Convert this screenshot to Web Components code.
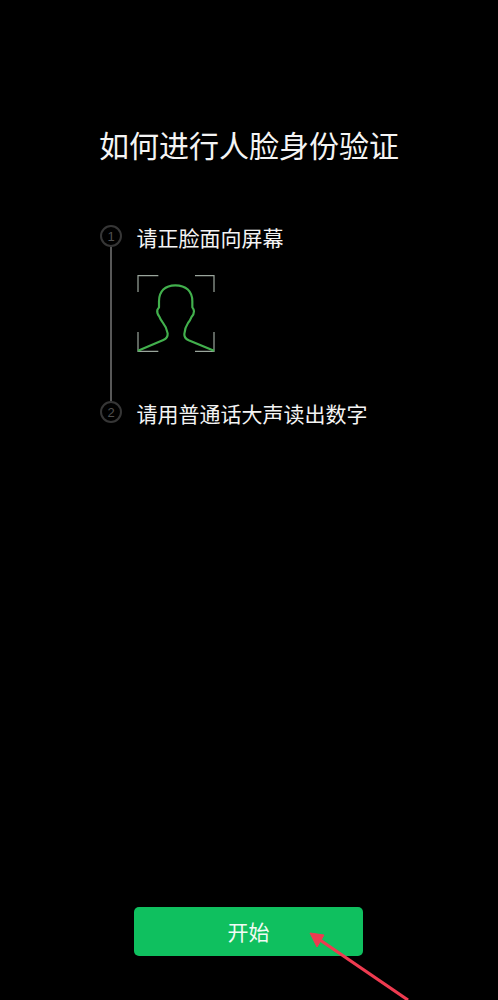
<!doctype html>
<html lang="zh">
<head>
<meta charset="utf-8">
<style>
html,body{margin:0;background:#000;height:100%}
body{font-family:"Noto Sans CJK SC","Liberation Sans",sans-serif;color:#fff}
</style>
</head>
<body>
<guide-screen>
  <span slot="title">如何进行人脸身份验证</span>
  <guide-step num="1" rail>
    <span slot="label">请正脸面向屏幕</span>
    <face-figure></face-figure>
  </guide-step>
  <guide-step num="2">
    <span slot="label">请用普通话大声读出数字</span>
  </guide-step>
  <start-button slot="action">开始</start-button>
</guide-screen>
<script>
function shadow(el,html){el.attachShadow({mode:'open'}).innerHTML=html}
customElements.define('guide-screen',class extends HTMLElement{constructor(){super();shadow(this,`
<style>
:host{display:flex;flex-direction:column;position:relative;width:498px;height:1000px;overflow:hidden;background:#000}
h1{margin:0;padding-top:122px;height:44px;line-height:44px;font-size:30px;font-weight:400;text-align:center;color:#f4f4f4}
.steps{display:flex;flex-direction:column;padding:59px 0 0 100px}
.action{margin-top:auto;padding:0 0 44px 134px}
svg{position:absolute;left:0;top:0;pointer-events:none}
</style>
<h1><slot name="title"></slot></h1>
<div class="steps"><slot></slot></div>
<div class="action"><slot name="action"></slot></div>
<svg width="498" height="1000" viewBox="0 0 498 1000" aria-hidden="true">
  <path d="M408 1000 L320 940" stroke="#ee3b50" stroke-width="3.2" fill="none"/>
  <path d="M310 933 L324 935 L317 947 Z" fill="#ee3b50" stroke="#ee3b50" stroke-width="1" stroke-linejoin="round"/>
</svg>`)}});
customElements.define('guide-step',class extends HTMLElement{constructor(){super();shadow(this,`
<style>
:host{display:grid;grid-template-columns:22px 1fr;column-gap:14.5px;font-size:21px;color:#f4f4f4}
:host([rail]){height:176px}
.mark{display:flex;flex-direction:column;align-items:center}
.dot{box-sizing:border-box;width:22px;height:22px;flex:none;border:2px solid #363636;border-radius:50%;display:flex;align-items:center;justify-content:center;font:13px/1 "Liberation Sans",sans-serif;color:#505050}
.rail{flex:1;width:1.5px;background:#585858;display:none}
:host([rail]) .rail{display:block}
.label{line-height:24px}
</style>
<div class="mark"><div class="dot"></div><div class="rail"></div></div>
<div><div class="label"><slot name="label"></slot></div><slot></slot></div>`);
}connectedCallback(){this.shadowRoot.querySelector('.dot').textContent=this.getAttribute('num')}});
customElements.define('face-figure',class extends HTMLElement{constructor(){super();shadow(this,`
<style>:host{display:block;margin-top:25px;width:78px;height:78px;margin-left:.5px}svg{display:block}</style>
<svg width="78" height="78" viewBox="21 18 234 234" fill="none">
  <path d="M24 72V23H85M195 23H252V72M252 192V250H195M85 250H24V192" stroke="#9aa59c" stroke-width="3.6"/>
  <path d="M24 248 L100 216 Q114 210 113 196 Q110 178 98 163 Q90 152 88 146 Q80 136 82 126 Q84 122 87 118 L87 100 C87 70 105 52 136 52 C168 52 187 70 187 100 L187 118 Q192 124 192 130 Q192 140 184 148 Q180 158 174 165 Q164 180 163 198 Q162 210 176 217 L252 248" stroke="#42b04d" stroke-width="6.5" stroke-linejoin="round"/>
</svg>`)}});
customElements.define('start-button',class extends HTMLElement{constructor(){super();shadow(this,`
<style>:host{display:flex;align-items:center;justify-content:center;box-sizing:border-box;width:229px;height:49px;padding-bottom:2px;background:#0fc05f;border-radius:5px;color:#f2fbf5;font-size:21px}</style><slot></slot>`)}});
</script>
</body>
</html>
